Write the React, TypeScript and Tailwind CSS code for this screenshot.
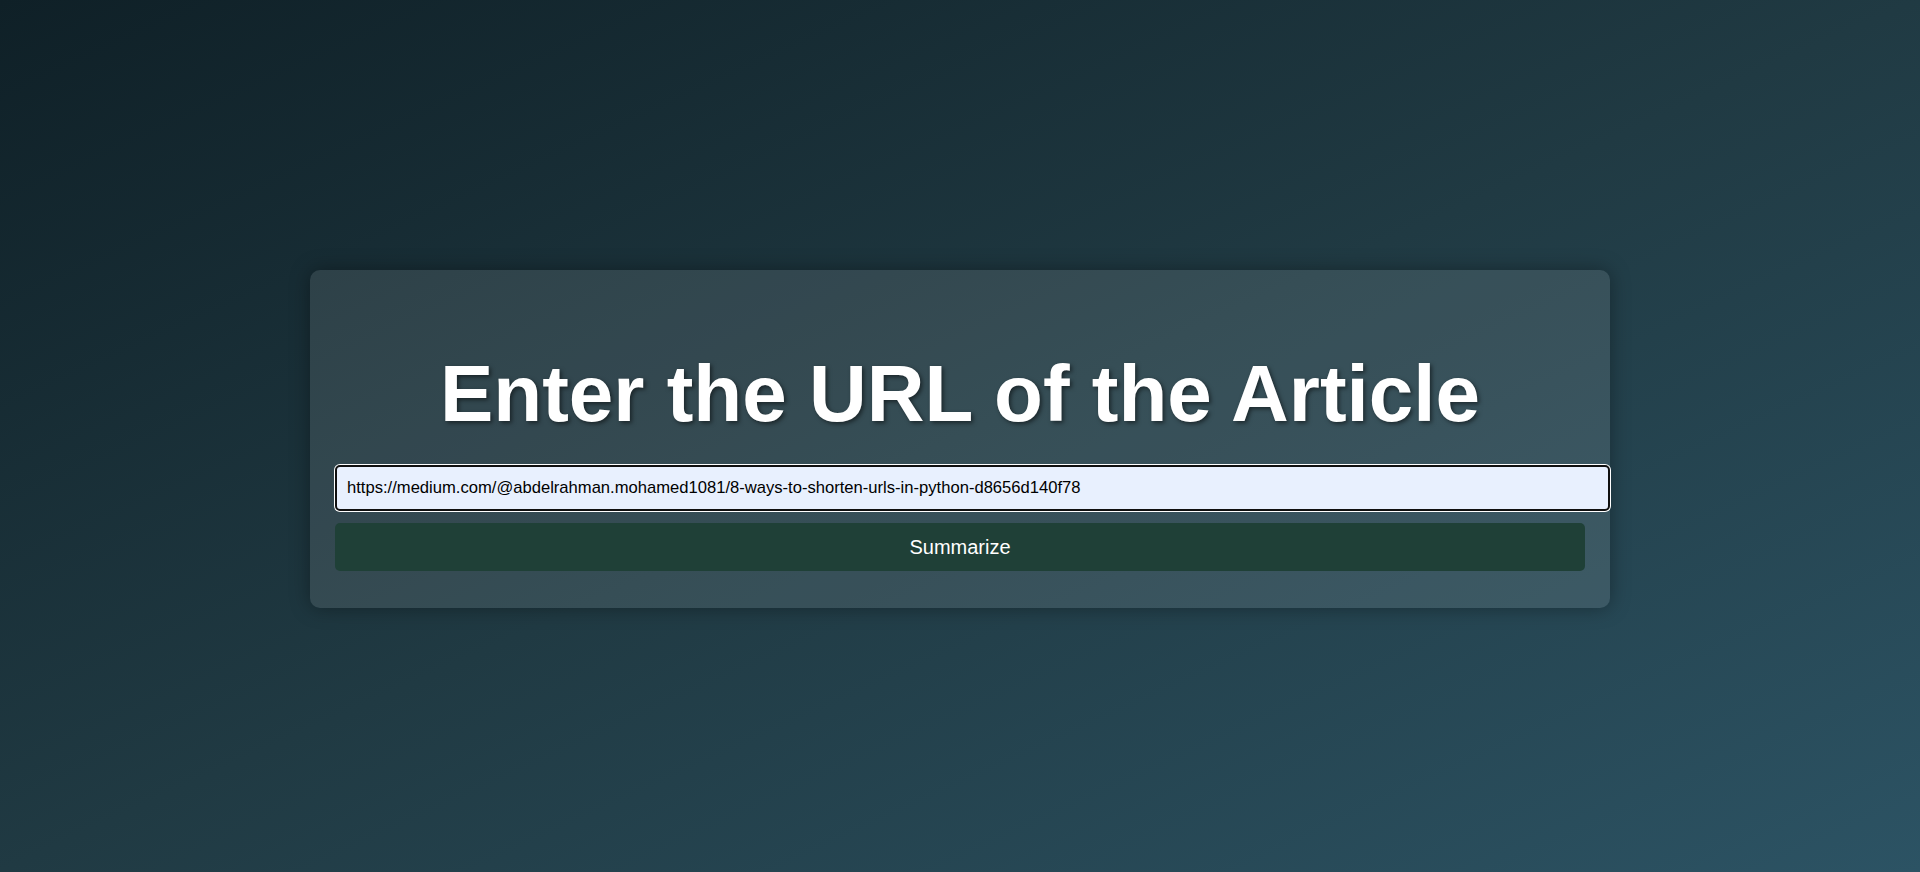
import { useState } from "react";

export default function App() {
  const [url, setUrl] = useState(
    "https://medium.com/@abdelrahman.mohamed1081/8-ways-to-shorten-urls-in-python-d8656d140f78"
  );

  return (
    <main className="flex min-h-screen items-center justify-center bg-gradient-to-br from-[#0f2027] via-[#203a43] to-[#2c5364] font-['Liberation_Sans',Arial,sans-serif]">
      <div className="mt-[6px] w-[1300px] rounded-[10px] bg-white/10 px-[25px] pt-[25px] pb-[37px] shadow-[0_0_20px_rgba(0,0,0,0.35)]">
        <h1 className="my-[53.6px] mb-[25px] text-center text-[80px] font-bold leading-[92px] text-white [text-shadow:2px_2px_4px_rgba(0,0,0,0.5)]">
          Enter the URL of the Article
        </h1>
        <input
          autoFocus
          value={url}
          onChange={(e) => setUrl(e.target.value)}
          className="block h-[46px] w-[calc(100%+25px)] rounded-[5px] border-2 border-[#101010] bg-[#e8f0fe] px-[10px] text-[16.6px] text-black outline-none ring-1 ring-white"
        />
        <button className="mt-[12px] block h-[48px] w-full rounded-[5px] bg-[#1f4037] text-[20px] text-white">
          Summarize
        </button>
      </div>
    </main>
  );
}
